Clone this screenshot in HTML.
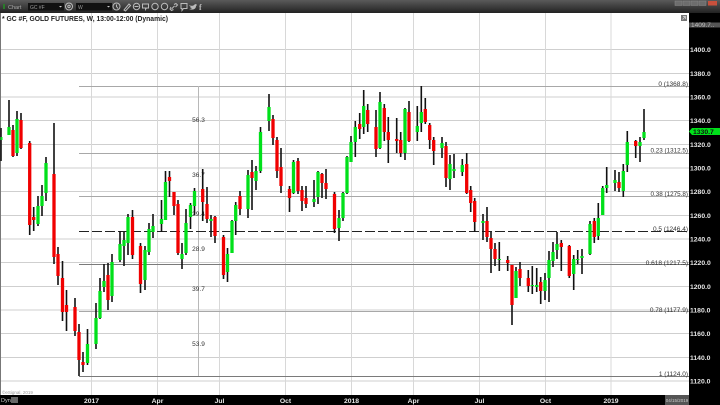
<!DOCTYPE html>
<html><head><meta charset="utf-8"><style>
html,body{margin:0;padding:0;background:#fff;width:720px;height:405px;overflow:hidden}
svg{display:block;filter:blur(.35px)}
text{font-family:"Liberation Sans",sans-serif}
</style></head><body>
<svg width="720" height="405" viewBox="0 0 720 405" xmlns="http://www.w3.org/2000/svg">
<defs><linearGradient id="g" x1="0" y1="0" x2="0" y2="1"><stop offset="0" stop-color="#5a5a5a"/><stop offset="1" stop-color="#222"/></linearGradient></defs>
<rect width="720" height="405" fill="#fff"/>
<!-- grid -->
<path d="M0 49.5H689M0 73.5H689M0 97H689M0 120.5H689M0 144.5H689M0 168H689M0 191.5H689M0 215.5H689M0 239H689M0 262.5H689M0 286.5H689M0 310H689M0 333.5H689M0 357.5H689M0 381H689" stroke="#cfcfcf" stroke-width="1" fill="none"/>
<path d="M91.5 13V395M157.5 13V395M219.5 13V395M285.5 13V395M351.5 13V395M413.5 13V395M479.5 13V395M545.5 13V395M611 13V395" stroke="#d8d8d8" stroke-width="1" fill="none"/>
<rect x="0" y="13" width="1" height="382" fill="#777"/>
<!-- fib -->
<path d="M79 86.5H689M79 153.5H689M79 196.5H689M79 311.5H689" stroke="#a8a8a8" stroke-width="1" fill="none"/>
<path d="M79 264.5H689M79 376.5H689" stroke="#7a7a7a" stroke-width="1" fill="none"/>
<path d="M198.5 86V376" stroke="#b8b8b8" stroke-width="1" fill="none"/>
<path d="M79 231.5H689" stroke="#222" stroke-width="1" stroke-dasharray="10 3" fill="none"/>
<!-- fib labels -->
<g font-size="6.5" fill="#333" text-anchor="end">
<text x="688" y="86">0 (1368.8)</text>
<text x="688" y="152.5" textLength="37.500" lengthAdjust="spacingAndGlyphs">0.23 (1312.5)</text>
<text x="688" y="196" textLength="37.500" lengthAdjust="spacingAndGlyphs">0.38 (1275.8)</text>
<text x="688" y="231">0.5 (1246.4)</text>
<text x="688" y="265">0.618 (1217.5)</text>
<text x="688" y="312">0.78 (1177.9)</text>
<text x="688" y="376">1 (1124.0)</text>
</g>
<g font-size="6.5" fill="#333" text-anchor="middle">
<text x="198.5" y="122">56.3</text>
<text x="198.5" y="177">36.7</text>
<text x="198.5" y="216">29.4</text>
<text x="198.5" y="251">28.9</text>
<text x="198.5" y="291">39.7</text>
<text x="198.5" y="346">53.9</text>
</g>
<!-- wicks -->
<path stroke="#111" stroke-width="1.6" fill="none" d="M1 128V161M9 100V135M13 125V157M17 111V156M21 113V149M29.7 141V235M33.7 207V231M38 196V226M42 185V216M46 157V201M54 123V264M58 247V285M62.5 261V321M66.5 290V331M75 298V336M79 324V376M83 352V372M87.5 329V365M96 303V349M100 278V319M104 264V292M108 263V310M112 254V302M120 231V262M124 232V266M128 214V255M132.5 210V259M140.5 243V293M145 246V290M149 223V255M153 214V238M161.5 200V232M165.5 171V220M169.5 171V197M174 192V215M178 200V255M182 243V269M186 209V255M190.5 203V229M194.5 188V215M202.7 169V221M207 187V223M211 215V237M215 216V243M223.5 235V279M227.5 248V282M232 220V253M235.7 202V235M240 191V215M248 170V218M252 160V210M256 166V190M260.5 127V173M269 94V131M273 115V145M277 137V178M281 148V193M289.5 186V212M293.5 160V194M298 158V194M302 186V211M306 186V208M314 180V207M318 171V204M322 173V198M326 169V199M334.5 192V233M339 210V241M343 192V221M347 156V194M351 136V162M355.3 121V157M359.7 113V139M363.7 90V134M367.7 104V132M376 110V157M380 92V149M384.3 104V141M388.3 117V163M396.7 118V153M400.7 132V157M405 108V160M409 101V142M417.3 106V141M421.3 86V132M425.3 98V124M429.7 123V149M433.7 137V165M442 137V158M446 142V187M450 155V190M454 154V178M462.3 159V176M466.7 153V194M470.7 186V212M474.7 198V232M483 214V240M487 207V242M491 232V273M495 243V266M499.3 242V271M507.7 256V271M512 265V325M516 267V298M520 262V286M528.3 270V292M532.3 266V294M536.7 268V292M540.7 277V304M545 273V300M549 251V302M553 242V267M557 232V259M561.3 240V271M569.3 245V278M573.7 255V290M577.7 250V264M582 249V274M590 221V255M594.3 218V243M598.3 203V240M602.7 186V215M606.7 167V193M615 170V191M619 172V192M623.3 164V197M627.3 131V172M635.7 140V158M640 137V162M644 109V140"/>
<!-- green bodies -->
<path stroke="#00e01a" stroke-width="3.3" fill="none" d="M9 127V135M17 119V153M38 206V224M42 196V206M46 163V193M87.5 344V363M96 318V344M100 291V318M104 281V287M112 262V296M120 244V260M124 240V246M128 217V243M145 250V280M149 229V252M153 226V232M161.5 219V224M165.5 182V220M182 254V259M186 223V253M190.5 205V217M194.5 191V206M211 219V221M227.5 254V272M232 221V253M235.7 205V221M248 175V209M256 171V181M260.5 132V171M269 107V121M293.5 162V193M314 199V202M318 172V197M339 218V228M343 193V218M347 157V193M351 142V162M355.3 127V142M363.7 106V127M380 102V148M405 109V153M417.3 126V132M421.3 112V123M442 143V148M450 164V179M454 169V171M462.3 165V172M483 221V223M499.3 259V260M516 271V298M532.3 285V286M536.7 285V287M545 280V291M549 260V278M553 252V261M557 244V250M573.7 259V274M577.7 259V260M582 256V258M590 224V254M598.3 218V236M602.7 188V215M606.7 185V188M615 180V183M623.3 171V191M627.3 142V165M640 142V146M644 132V138"/>
<path stroke="#00e01a" stroke-width="2" fill="none" d="M1.5 137V140"/>
<!-- red bodies -->
<path stroke="#f00000" stroke-width="3.3" fill="none" d="M13 130V156M21 120V148M29.7 143V225M33.7 217V220M54 174V257M58 254V276M62.5 278V312M66.5 305V312M75 307V331M79 332V360M83 362V365M108 275V300M132.5 217V255M140.5 246V284M169.5 177V181M174 192V206M178 204V253M202.7 189V202M207 204V219M215 217V236M223.5 237V275M240 196V209M252 172V178M273 119V138M277 140V171M281 167V186M289.5 189V198M298 161V191M302 190V201M306 198V204M322 174V183M326 183V189M334.5 194V229M359.7 124V129M367.7 110V124M376 127V149M384.3 108V132M388.3 132V140M396.7 139V141M400.7 140V153M409 112V141M425.3 109V122M429.7 125V140M433.7 140V151M446 146V178M466.7 164V193M470.7 190V203M474.7 201V222M487 221V237M491 238V249M495 249V259M507.7 260V263M512 265V305M520 269V278M528.3 278V286M540.7 282V291M561.3 243V247M569.3 246V276M594.3 221V237M619 182V188M635.7 141V146"/>
<!-- top bar -->
<rect x="0" y="0" width="720" height="13" fill="url(#g)"/>
<rect x="3" y="4" width="2" height="5" fill="#2a7a2a"/>
<text x="8" y="9" font-size="5.500" fill="#aaa">Chart</text>
<rect x="28" y="3" width="36" height="7.500" fill="#111"/>
<text x="30" y="9" font-size="5" fill="#999">GC #F</text>
<path d="M59 6h3l-1.500 1.500z" fill="#ccc"/>
<rect x="76" y="3" width="36" height="7.500" fill="#111"/>
<text x="78" y="9" font-size="5" fill="#999">W</text>
<path d="M107 6h3l-1.500 1.500z" fill="#ccc"/>
<g fill="none" stroke="#bbb" stroke-width="1">
<circle cx="69" cy="6.500" r="3.500"/><circle cx="69" cy="6.500" r="1.200"/>
<circle cx="116.500" cy="6.500" r="3.500"/><path d="M116.500 4.500v2l1.500 2"/>
<path d="M124 10l5-6 1.500 1.500-5 5.500z"/>
<circle cx="136.500" cy="6.500" r="3.200"/><path d="M134.500 6.500h4"/>
<path d="M142.500 4h6v4h-2l-1 1.500v-1.500h-3z"/>
<circle cx="155" cy="6.500" r="3.200"/>
<circle cx="164.500" cy="6.500" r="3.200"/>
<path d="M171.500 9l3-3M174 4.500l2-1 1.500 1.500-2 2M171 7l-1 2 1.500 1.500 2-1"/>
<path d="M181 3.500h6v5h-3.500l-1.500 2v-2h-1z"/>
</g>
<path d="M189 5c2 1 4 1 5 0 1-1 2-1 3-1l-1 1 1 0-1 1c0 3-3 4.500-7 3 1.500 0 2.500-.5 3-1-1.500 0-2-1-2-1h1c-1-.5-1.500-1-1.500-1.500l1 .2c-.5-.5-.7-.700-.5-.7z" fill="#bbb"/>
<text x="199" y="10" font-size="8" font-weight="bold" fill="#bbb" style="font-family:'Liberation Serif',serif">f</text>
<g fill="#6d6d6d" stroke="#8a8a8a" stroke-width=".5">
<rect x="675" y="1" width="7" height="4.500"/><rect x="683" y="1" width="7" height="4.500"/><rect x="691" y="1" width="7" height="4.500"/><rect x="699" y="1" width="7" height="4.500"/>
</g>
<rect x="708" y="1" width="9" height="4.500" fill="#c8503c"/>
<!-- title -->
<text x="2" y="21" font-size="7.500" font-weight="bold" fill="#222" textLength="166" lengthAdjust="spacingAndGlyphs">* GC #F, GOLD FUTURES, W, 13:00-12:00 (Dynamic)</text>
<rect x="681" y="15" width="6" height="6" fill="#777"/>
<path d="M682.500 19.500l3-3M683 16.500h2.500v2.500" stroke="#ddd" stroke-width=".7" fill="none"/>
<!-- right axis -->
<rect x="689" y="13" width="31" height="382" fill="#000"/>
<rect x="689" y="22.500" width="31" height="5" fill="#555"/>
<text x="691" y="27" font-size="6.500" fill="#bbb">1409.7..</text>
<g font-size="6.800" font-weight="bold" fill="#e8e8e8">
<text x="690" y="52">1400.0</text>
<text x="690" y="76">1380.0</text>
<text x="690" y="99.500">1360.0</text>
<text x="690" y="123">1340.0</text>
<text x="690" y="147">1320.0</text>
<text x="690" y="170.500">1300.0</text>
<text x="690" y="194">1280.0</text>
<text x="690" y="218">1260.0</text>
<text x="690" y="241.500">1240.0</text>
<text x="690" y="265">1220.0</text>
<text x="690" y="289">1200.0</text>
<text x="690" y="312.500">1180.0</text>
<text x="690" y="336">1160.0</text>
<text x="690" y="360">1140.0</text>
<text x="690" y="383.500">1120.0</text>
</g>
<path d="M689 131.500l3-3.500h28v7h-28z" fill="#00e01a"/>
<text x="693" y="134" font-size="6.800" font-weight="bold" fill="#111">1330.7</text>
<!-- bottom -->
<text x="2" y="394" font-size="4.500" fill="#999">©eSignal, 2019</text>
<rect x="0" y="395" width="720" height="10" fill="#000"/>
<text x="1" y="402" font-size="5.500" fill="#ccc">Dyn</text>
<rect x="11" y="397" width="7" height="6" fill="#666"/>
<g font-size="6.800" font-weight="bold" fill="#e8e8e8" text-anchor="middle">
<text x="91.500" y="403">2017</text>
<text x="157.500" y="403">Apr</text>
<text x="219.500" y="403">Jul</text>
<text x="285.500" y="403">Oct</text>
<text x="351.500" y="403">2018</text>
<text x="413.500" y="403">Apr</text>
<text x="479.500" y="403">Jul</text>
<text x="545.500" y="403">Oct</text>
<text x="611" y="403">2019</text>
</g>
<rect x="665" y="395" width="24" height="10" fill="#555"/>
<text x="677" y="402" font-size="4.500" fill="#ccc" text-anchor="middle">04/15/2019</text>
</svg>
</body></html>
